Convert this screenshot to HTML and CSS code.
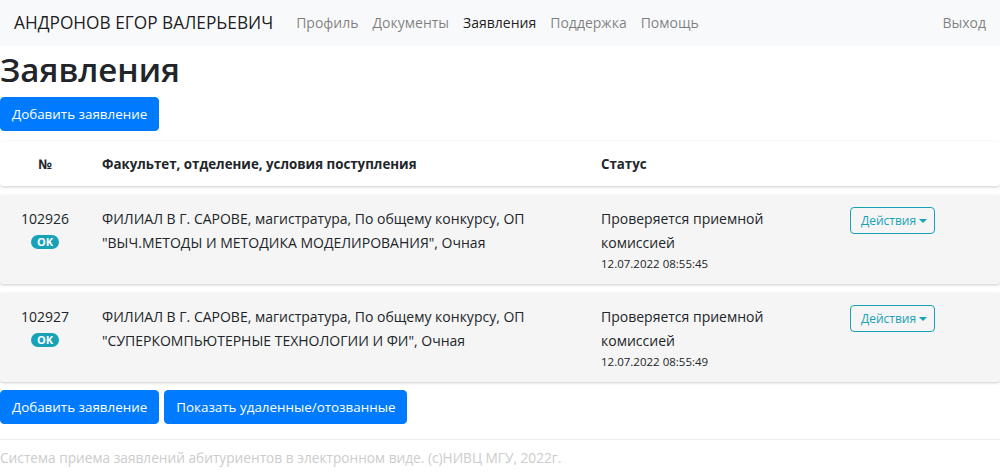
FILE: index.html
```html
<!DOCTYPE html>
<html lang="ru">

<head>
    <meta charset="utf-8">
    <meta name="viewport" content="width=device-width, initial-scale=1">
    <title>Заявления</title>
    <link rel="stylesheet" href="styles.css">
</head>

<body>

    <!-- Верхнее меню -->
    <nav class="navbar">
        <span class="brand">АНДРОНОВ ЕГОР ВАЛЕРЬЕВИЧ</span>
        <ul class="nav">
            <li><a href="#">Профиль</a></li>
            <li><a href="#">Документы</a></li>
            <li><a href="#" class="active">Заявления</a></li>
            <li><a href="#">Поддержка</a></li>
            <li><a href="#">Помощь</a></li>
        </ul>
        <a href="#" class="logout">Выход</a>
    </nav>

    <main class="content">
        <h1>Заявления</h1>
        <button class="btn btn-primary">Добавить заявление</button>

        <!-- Список заявлений -->
        <div class="apps">
            <div class="apps-row apps-head">
                <div class="cell cell-num">№</div>
                <div class="cell">Факультет, отделение, условия поступления</div>
                <div class="cell">Статус</div>
                <div class="cell"></div>
            </div>

            <div class="apps-row">
                <div class="cell cell-num">
                    102926<br>
                    <span class="badge">OK</span>
                </div>
                <div class="cell">ФИЛИАЛ В Г. САРОВЕ, магистратура, По общему конкурсу, ОП "ВЫЧ.МЕТОДЫ И МЕТОДИКА МОДЕЛИРОВАНИЯ", Очная</div>
                <div class="cell">
                    Проверяется приемной комиссией
                    <div class="date">12.07.2022 08:55:45</div>
                </div>
                <div class="cell">
                    <button class="btn btn-outline">Действия <span class="caret"></span></button>
                </div>
            </div>

            <div class="apps-row">
                <div class="cell cell-num">
                    102927<br>
                    <span class="badge">OK</span>
                </div>
                <div class="cell">ФИЛИАЛ В Г. САРОВЕ, магистратура, По общему конкурсу, ОП "СУПЕРКОМПЬЮТЕРНЫЕ ТЕХНОЛОГИИ И ФИ", Очная</div>
                <div class="cell">
                    Проверяется приемной комиссией
                    <div class="date">12.07.2022 08:55:49</div>
                </div>
                <div class="cell">
                    <button class="btn btn-outline">Действия <span class="caret"></span></button>
                </div>
            </div>
        </div>

        <div class="actions">
            <button class="btn btn-primary">Добавить заявление</button>
            <button class="btn btn-primary">Показать удаленные/отозванные</button>
        </div>
    </main>

    <footer class="footer">
        Система приема заявлений абитуриентов в электронном виде. (c)НИВЦ МГУ, 2022г.
    </footer>

</body>

</html>
```

FILE: styles.css
```css
* {
    box-sizing: border-box;
}

body {
    font-family: "Open Sans", "Noto Sans", sans-serif;
    font-size: 14px;
    line-height: 24px;
    color: #212529;
    background: #fff;
    margin: 0;
}

/* Верхнее меню */
.navbar {
    display: flex;
    align-items: center;
    height: 46px;
    padding: 0 14px;
    background: #f8f9fa;
}

.brand {
    font-size: 17.3px;
    color: rgba(0, 0, 0, 0.9);
    margin-right: 16px;
}

.nav {
    display: flex;
    list-style: none;
    margin: 0;
    padding: 0;
    flex: 1;
}

.nav a,
.logout {
    display: block;
    padding: 0 7px;
    color: rgba(0, 0, 0, 0.5);
    text-decoration: none;
}

.nav a.active {
    color: rgba(0, 0, 0, 0.9);
}

.logout {
    padding-right: 0;
}

/* Основная часть */
.content {
    padding: 0;
}

h1 {
    font-size: 33px;
    font-weight: 600;
    line-height: 44px;
    margin: 2px 0 5px;
}

.btn {
    font-family: inherit;
    font-size: 13.4px;
    line-height: 22px;
    border: 1px solid transparent;
    border-radius: 4px;
    padding: 5px 11px;
    cursor: pointer;
}

.btn-primary {
    background: #007bff;
    border-color: #007bff;
    color: #fff;
}

.btn-outline {
    background: transparent;
    border-color: #17a2b8;
    color: #17a2b8;
    font-size: 12px;
    line-height: 19px;
    padding: 3px 7px 3px 10px;
}

.caret {
    display: inline-block;
    vertical-align: 2px;
    border-top: 4px solid;
    border-left: 4px solid transparent;
    border-right: 4px solid transparent;
}

/* Таблица заявлений */
.apps {
    display: flex;
    flex-direction: column;
    gap: 9px;
    padding: 10px 0 8px;
}

.apps-row {
    display: grid;
    grid-template-columns: 90px 499px 249px 1fr;
    background: #f5f5f5;
    border-radius: 3px;
    box-shadow: 0 1px 3px rgba(0, 0, 0, 0.2);
}

.apps-head {
    background: #fff;
    font-weight: 700;
    font-size: 13.3px;
}

.cell {
    padding: 11px 12px 10px;
}

.apps-row:not(.apps-head) .cell {
    padding: 12px 12px 11px;
}

.cell-num {
    text-align: center;
}

.badge {
    display: inline-block;
    background: #17a2b8;
    color: #fff;
    font-size: 11px;
    font-weight: 700;
    line-height: 14px;
    padding: 0 6px;
    border-radius: 10px;
    vertical-align: top;
    margin-top: 4px;
}

.date {
    font-size: 11.5px;
    line-height: 18px;
    margin-top: 0;
}

.actions {
    display: flex;
    gap: 5px;
}

/* Подвал */
.footer {
    margin-top: 15px;
    border-top: 1px solid #eee;
    padding: 6px 0;
    font-size: 13.7px;
    color: #ccc;
}
```
